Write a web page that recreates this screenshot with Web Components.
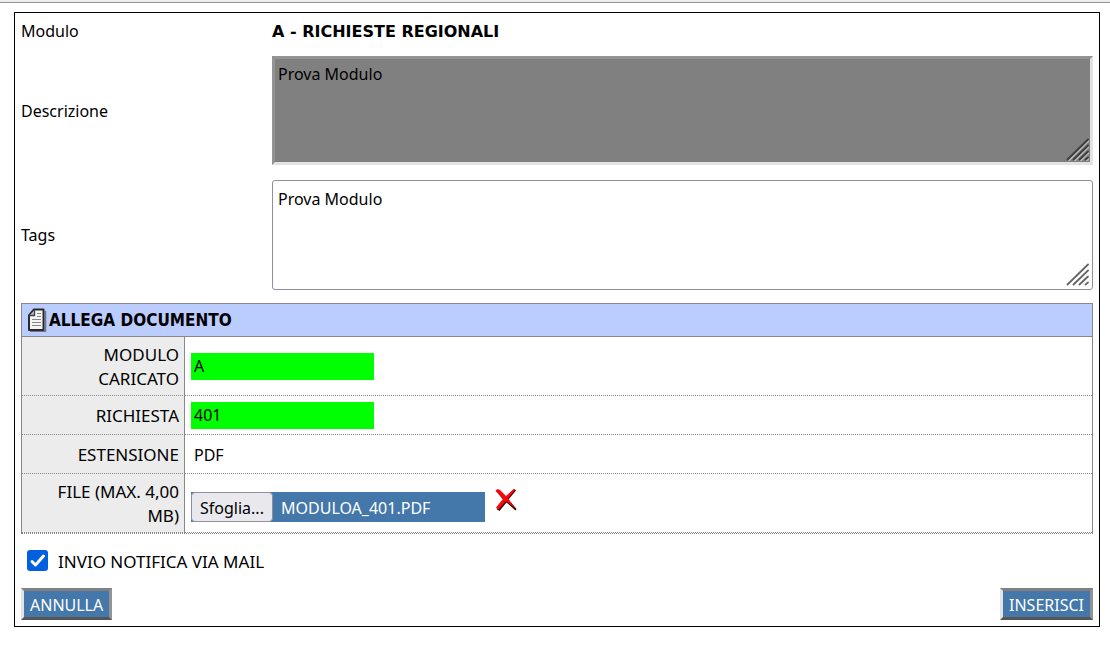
<!DOCTYPE html>
<html lang="it">
<head>
<meta charset="utf-8">
<title>Allega documento</title>
<style>
  body {
    margin: 0;
    background: #fff;
    color: #000;
    font: 16px/24px "Noto Sans", sans-serif;
  }
  strong { font-family: "DejaVu Sans", sans-serif; }
</style>
</head>
<body>
<request-page>
  <form-row label="Modulo"><strong>A - RICHIESTE REGIONALI</strong></form-row>
  <text-row label="Descrizione" value="Prova Modulo" locked></text-row>
  <text-row label="Tags" value="Prova Modulo"></text-row>
  <attach-panel></attach-panel>
  <check-option label="INVIO NOTIFICA VIA MAIL"></check-option>
  <action-bar>
    <push-button slot="start">ANNULLA</push-button>
    <push-button slot="end">INSERISCI</push-button>
  </action-bar>
</request-page>

<script>
function define(name, html, setup) {
  const template = document.createElement('template');
  template.innerHTML = html;
  customElements.define(name, class extends HTMLElement {
    connectedCallback() {
      if (this.shadowRoot) return;
      const root = this.attachShadow({ mode: 'open' });
      root.append(template.content.cloneNode(true));
      if (setup) setup(this, root);
    }
  });
}

define('request-page', `
  <style>
    :host { display: block; }
    .strip { height: 2px; background: #eee; border-bottom: 1px solid #949494; }
    main { margin: 9px 10px 20px 14px; padding: 6px; border: 1px solid #000; }
  </style>
  <div class="strip"></div>
  <main><slot></slot></main>
`);

define('form-row', `
  <style>
    :host { display: grid; grid-template-columns: 251px 1fr; margin-bottom: 12px; }
  </style>
  <span class="name"></span>
  <div><slot></slot></div>
`, (host, root) => {
  root.querySelector('.name').textContent = host.getAttribute('label');
});

define('text-row', `
  <style>
    :host { display: grid; grid-template-columns: 251px 1fr; align-items: center; margin-bottom: 13px; }
    :host([locked]) { margin-bottom: 15px; }
    .box { position: relative; display: grid; }
    textarea {
      box-sizing: border-box; width: 100%; height: 110px; margin: 0; padding: 6px 5px;
      border: 1px solid #8f8f9d; border-radius: 3px; resize: none;
      font: inherit; color: #000; background: #fff; outline: none;
    }
    :host([locked]) textarea {
      height: 109px; padding: 3px; background: #808080; border-radius: 0;
      border: 3px solid; border-color: #939393 #e3e3e3 #e3e3e3 #939393;
    }
    svg { position: absolute; right: 4px; bottom: 4px; pointer-events: none; }
    .grip { stroke: #666; }
    .shine { stroke: none; }
    :host([locked]) .grip { stroke: #3c3c3c; }
    :host([locked]) .shine { stroke: #b4b4b4; }
  </style>
  <label for="field"></label>
  <div class="box">
    <textarea id="field"></textarea>
    <svg width="23" height="23" fill="none" stroke-width="1.8" stroke-linecap="round" aria-hidden="true">
      <path class="shine" d="M3 22.500 22.500 3M9 22.500 22.500 9M15 22.500 22.500 15M21 22.500 22.500 21"/>
      <path class="grip" d="M1.500 21.500 22 1.500M7.500 21.500 22 7.500M13.500 21.500 22 13.500M19.500 21.500 22 19.500"/>
    </svg>
  </div>
`, (host, root) => {
  root.querySelector('label').textContent = host.getAttribute('label');
  const field = root.querySelector('textarea');
  field.value = host.getAttribute('value');
  field.readOnly = host.hasAttribute('locked');
});

define('page-icon', `
  <style>:host { display: inline-flex; } svg { display: block; }</style>
  <svg width="20" height="24" viewBox="0 0 20 24" aria-hidden="true">
    <path d="M3 23.500H18.500V3" fill="none" stroke="#70758c" stroke-width="1.500"/>
    <path d="M7 1.500H16.500V22H2V7.500Z" fill="#f4f4f4" stroke="#2a2a2a" stroke-width="2" stroke-linejoin="round"/>
    <path d="M7.500 2V7.500H2.500" fill="#bbb" stroke="#444" stroke-width="1.300"/>
    <path d="M10 5.500H14M10 8.500H14M5 11.500H14M5 14.500H14M5 17.500H14" stroke="#888"/>
  </svg>
`);

define('file-picker', `
  <style>
    :host { display: flex; align-items: flex-start; gap: 10px; }
    .picker { position: relative; display: flex; width: 294px; height: 30px; background: #4477aa; color: #fff; margin-top: 4px; }
    label {
      box-sizing: border-box; width: 82px; padding: 3px 0 0; text-align: center;
      border: 1px solid #8f8f9d; border-radius: 4px; background: #e9e9ed; color: #000;
    }
    output { padding: 4px 8px 0; }
    input { position: absolute; inset: 0; width: 100%; opacity: 0; }
    button { border: 0; padding: 0; background: none; display: block; }
    svg { display: block; }
  </style>
  <div class="picker">
    <label for="file">Sfoglia...</label>
    <output for="file">MODULOA_401.PDF</output>
    <input id="file" type="file">
  </div>
  <button type="button" aria-label="Rimuovi file">
    <svg width="22" height="24" viewBox="0 0 22 24" aria-hidden="true">
      <path d="M1 3Q3 .5 6 3.500L11.500 9 19.500 1 21 2.500 13.500 11.500 21.500 21 20.500 22.500 11.500 14.500 4.500 23 1.500 21 8.500 12Z" fill="#3d0000"/>
      <path d="M.5 2.500Q3 0 5.500 2.500L11 8 18.500 1 20 2 13 10.500 20.500 20.500 11 13 3.500 21.500 1 19.500 8 11Z" fill="#f50a0a"/>
    </svg>
  </button>
`);

define('attach-panel', `
  <style>
    :host { display: block; margin-bottom: 14px; }
    table { width: 100%; border-collapse: separate; border-spacing: 0; border: 1px solid #888; border-bottom: 1px dotted #888; }
    th, td { padding: 0 6px; border-bottom: 1px dotted #888; font-weight: normal; text-align: left; }
    thead th { height: 32px; padding: 0 5px; background: #bbccff; border-bottom: 1px solid #888; font: bold 17px/24px "DejaVu Sans Condensed", "DejaVu Sans", sans-serif; }
    .title { display: flex; align-items: center; gap: 2px; }
    tbody th { box-sizing: border-box; width: 163px; padding: 2px 5px 0 30px; font-size: 17px; text-align: right; background: #ececec; border-right: 1px solid #888; }
    tr { height: 39px; }
    thead tr { height: 33px; }
    .tall { height: 59px; }
    .field { display: block; box-sizing: border-box; width: 183px; height: 27px; padding: 1px 3px; border: 0; background: #0f0; font: inherit; color: #000; outline: none; }
    .plain { padding: 2px 9px 0; }
    .upload { padding-top: 3px; }
  </style>
  <table>
    <thead><tr><th colspan="2"><span class="title"><page-icon></page-icon>ALLEGA DOCUMENTO</span></th></tr></thead>
    <tbody>
      <tr class="tall"><th scope="row"><label for="module">MODULO CARICATO</label></th><td><input class="field" id="module" value="A" readonly></td></tr>
      <tr><th scope="row"><label for="request">RICHIESTA</label></th><td><input class="field" id="request" value="401" readonly></td></tr>
      <tr><th scope="row">ESTENSIONE</th><td class="plain">PDF</td></tr>
      <tr class="tall"><th scope="row">FILE (MAX. 4,00 MB)</th><td class="upload"><file-picker></file-picker></td></tr>
    </tbody>
  </table>
`);

define('check-option', `
  <style>
    :host { display: block; margin-bottom: 14px; padding-left: 6px; }
    label { display: flex; align-items: flex-start; gap: 10px; }
    .tick { position: relative; display: block; width: 21px; height: 21px; margin-top: 2px; }
    .text { padding-top: 2px; font-size: 17px; }
    input { appearance: none; display: block; width: 21px; height: 21px; margin: 0; border-radius: 3px; background: #fff; }
    input:checked { background: #0060df; }
    svg { position: absolute; inset: 0; pointer-events: none; }
  </style>
  <label>
    <span class="tick">
      <input type="checkbox" checked>
      <svg width="21" height="21" viewBox="0 0 21 21" fill="none" stroke="#fff" stroke-width="3" stroke-linecap="round" stroke-linejoin="round" aria-hidden="true"><path d="M5 11.500 8.500 15 16.500 6"/></svg>
    </span>
    <span class="text"></span>
  </label>
`, (host, root) => {
  root.querySelector('.text').textContent = host.getAttribute('label');
});

define('action-bar', `
  <style>:host { display: flex; justify-content: space-between; }</style>
  <slot name="start"></slot>
  <slot name="end"></slot>
`);

define('push-button', `
  <style>
    :host { display: block; }
    button {
      display: block; height: 32px; margin: 0; padding: 1px 6px 0;
      border: 3px solid; border-color: #808080 #939393 #555 #e3e3e3;
      background: #4477aa; color: #fff; font: inherit;
    }
  </style>
  <button type="button"><slot></slot></button>
`);
</script>
</body>
</html>
